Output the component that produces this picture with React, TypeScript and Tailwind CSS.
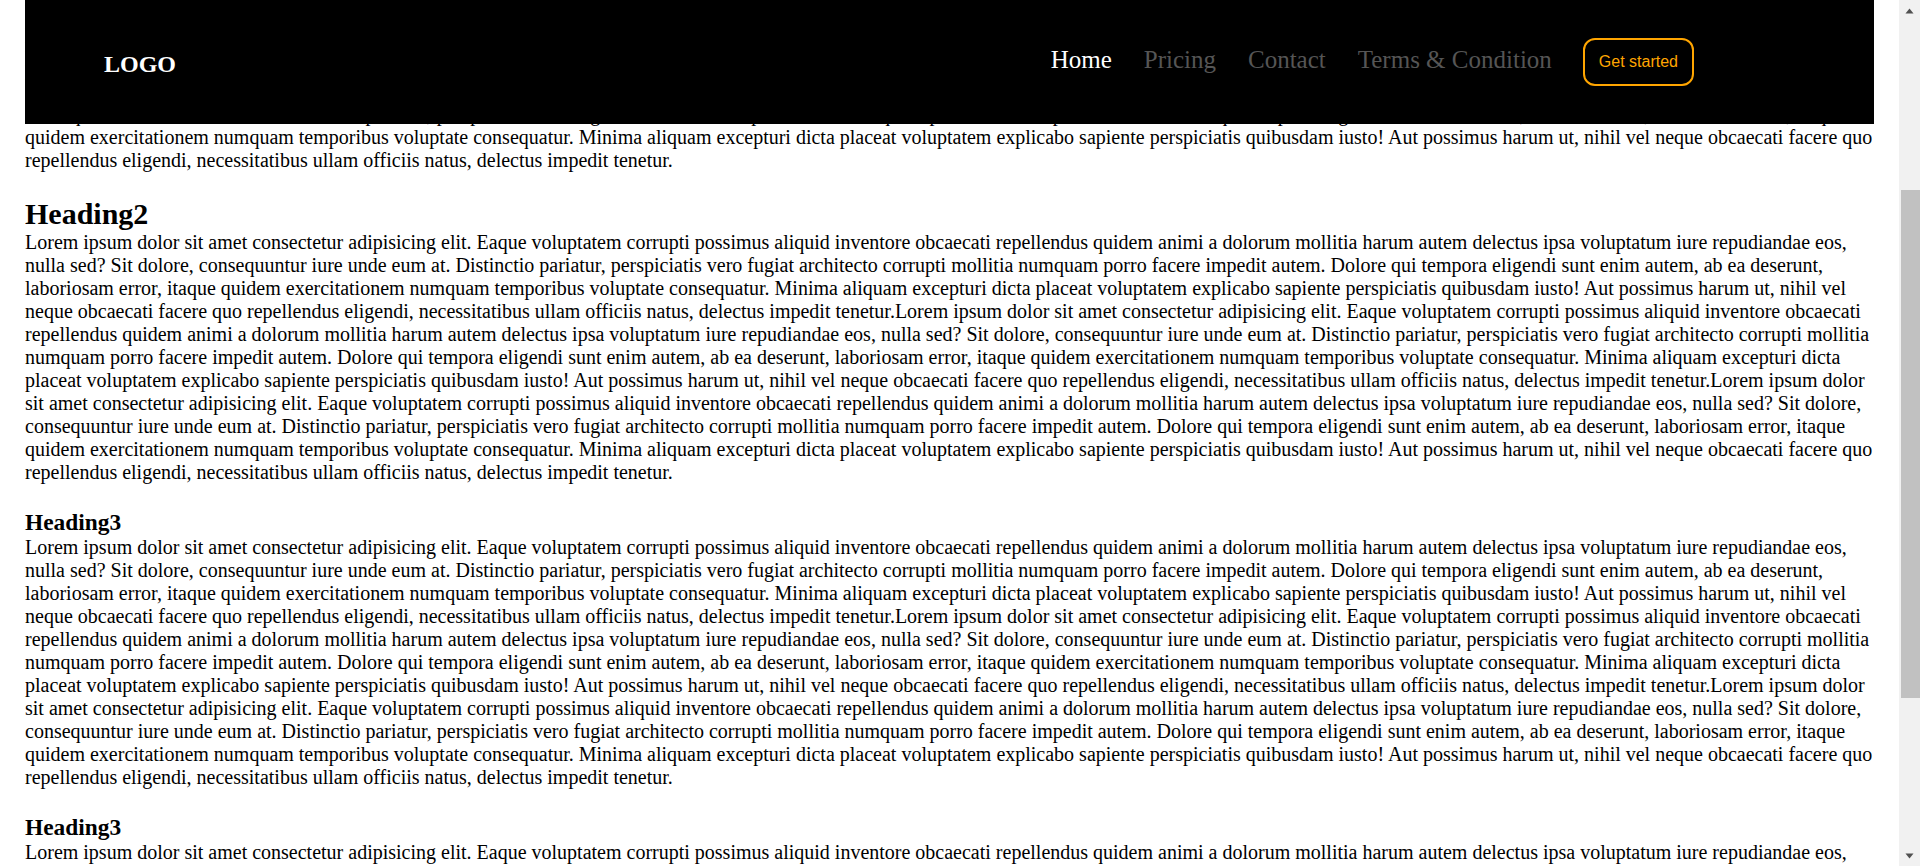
import { useEffect, useRef } from 'react';

const LOREM =
  'Lorem ipsum dolor sit amet consectetur adipisicing elit. Eaque voluptatem corrupti possimus aliquid inventore obcaecati repellendus quidem animi a dolorum mollitia harum autem delectus ipsa voluptatum iure repudiandae eos, nulla sed? Sit dolore, consequuntur iure unde eum at. Distinctio pariatur, perspiciatis vero fugiat architecto corrupti mollitia numquam porro facere impedit autem. Dolore qui tempora eligendi sunt enim autem, ab ea deserunt, laboriosam error, itaque quidem exercitationem numquam temporibus voluptate consequatur. Minima aliquam excepturi dicta placeat voluptatem explicabo sapiente perspiciatis quibusdam iusto! Aut possimus harum ut, nihil vel neque obcaecati facere quo repellendus eligendi, necessitatibus ullam officiis natus, delectus impedit tenetur.';

const TEXT = LOREM + LOREM + LOREM;

const navItems = [
  { label: 'Home', active: true },
  { label: 'Pricing', active: false },
  { label: 'Contact', active: false },
  { label: 'Terms & Condition', active: false },
];

function ScrollArrow({ up }: { up: boolean }) {
  return (
    <div className="flex h-[21px] items-center justify-center">
      <svg width="9" height="6" viewBox="0 0 9 6">
        <path d={up ? 'M0.5 5.5 L4.5 0.5 L8.5 5.5 Z' : 'M0.5 0.5 L4.5 5.5 L8.5 0.5 Z'} fill="#505050" />
      </svg>
    </div>
  );
}

export default function App() {
  const scrollRef = useRef<HTMLDivElement>(null);

  // page is shown scrolled part way down
  useEffect(() => {
    if (scrollRef.current) scrollRef.current.scrollTop = 277;
  }, []);

  return (
    <div className="flex h-screen bg-white font-['Liberation_Serif',serif] leading-[normal] text-black">
      <div ref={scrollRef} className="flex-1 overflow-y-auto [scrollbar-width:none]">
        {/* Header */}
        <header className="sticky top-0 z-10 mx-[25px] flex h-[124px] w-[1849px] items-center justify-between bg-black pl-[79px] pr-[180px]">
          <div className="mt-[5px] text-[24px] font-bold text-white">LOGO</div>
          <nav className="flex items-center">
            <ul className="mb-[5px] flex items-center gap-[32px] text-[25px]">
              {navItems.map((item) => (
                <li key={item.label}>
                  <a href="#" className={item.active ? 'text-white' : 'text-[#555555]'}>
                    {item.label}
                  </a>
                </li>
              ))}
            </ul>
            <button className="ml-[31px] rounded-[12px] border-2 border-[#ffa500] px-[14px] py-[13px] font-['Liberation_Sans',sans-serif] text-[16px] leading-[normal] text-[#ffa500]">
              Get started
            </button>
          </nav>
        </header>

        {/* Content */}
        <main className="mx-[25px] w-[1849px] pb-[25px] text-[20px]">
          <section>
            <h1 className="mt-[25px] text-[40px] font-bold">Heading1</h1>
            <p>{TEXT}</p>
          </section>
          <section>
            <h2 className="mt-[25px] text-[30px] font-bold">Heading2</h2>
            <p>{TEXT}</p>
          </section>
          <section>
            <h3 className="mt-[25px] text-[23.4px] font-bold">Heading3</h3>
            <p>{TEXT}</p>
          </section>
          <section>
            <h3 className="mt-[25px] text-[23.4px] font-bold">Heading3</h3>
            <p>{TEXT}</p>
          </section>
        </main>
      </div>

      {/* Scrollbar */}
      <div className="flex w-[21px] flex-col bg-[#f1f1f1]">
        <ScrollArrow up />
        <div className="flex-1">
          <div className="mt-[169px] ml-[2px] h-[508px] bg-[#c1c1c1]" />
        </div>
        <ScrollArrow up={false} />
      </div>
    </div>
  );
}
